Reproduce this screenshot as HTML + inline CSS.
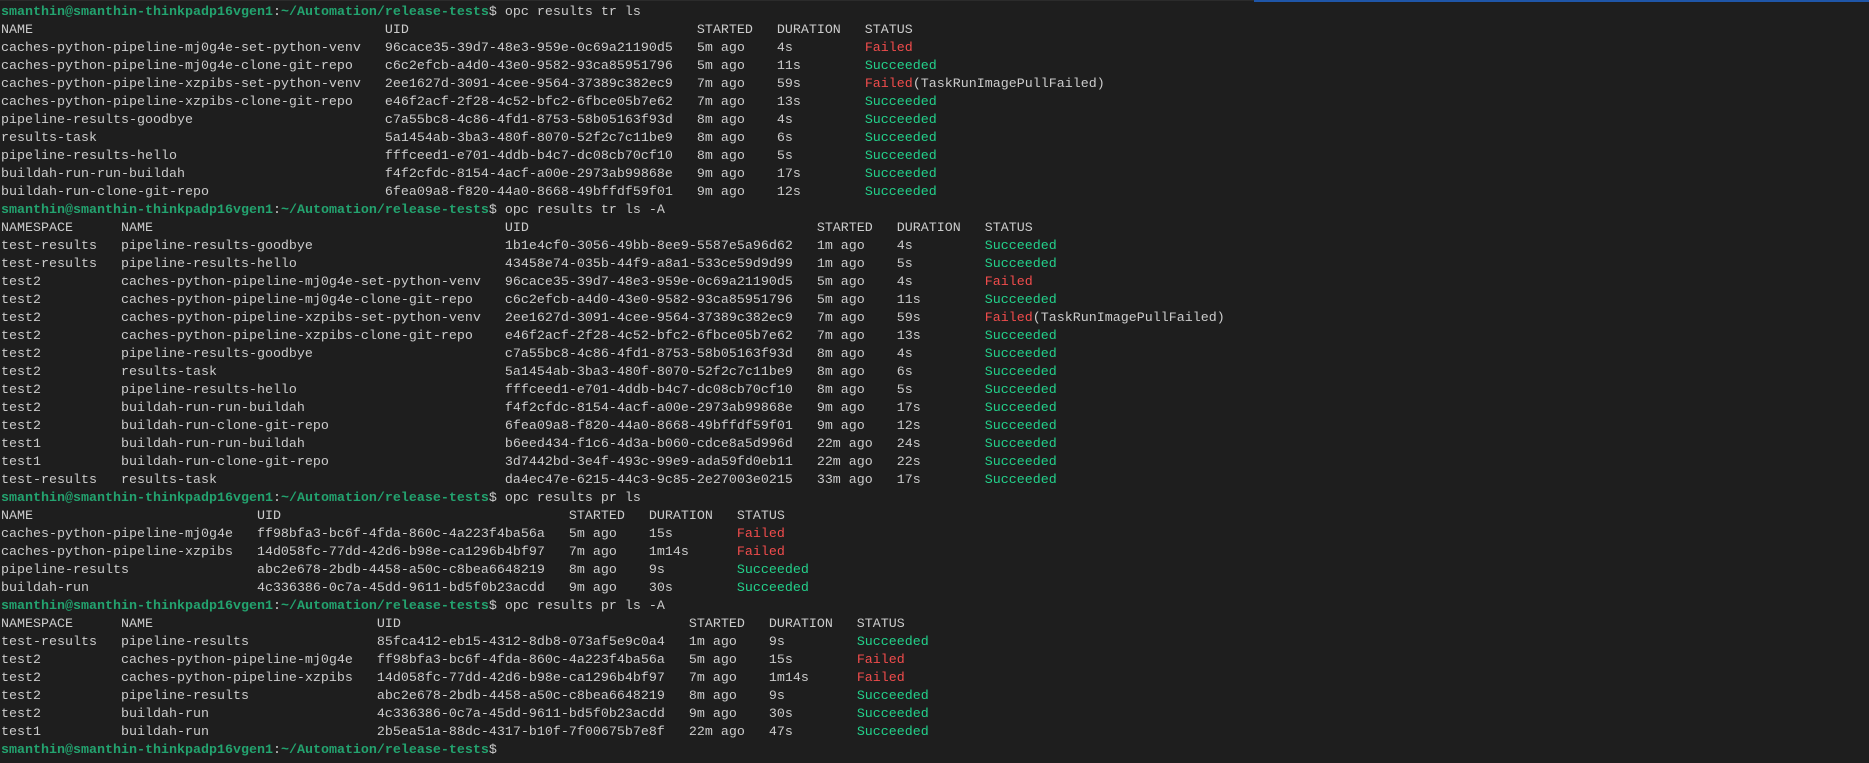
<!DOCTYPE html>
<html><head><meta charset="utf-8"><style>
html,body{margin:0;padding:0;background:#1e1e1e;width:1869px;height:763px;overflow:hidden}
.bar{position:absolute;left:1254px;top:0;width:615px;height:2px;background:#1f56a8}
.top{position:absolute;left:0;top:0;width:1254px;height:1px;background:#2b2b2b}
pre{margin:0;position:absolute;left:1px;top:4px;font-family:"Liberation Mono",monospace;font-size:13.33px;line-height:18px;color:#cccccc}
.p{color:#23a36f;font-weight:bold}
.r{color:#f14c4c}
.g{color:#23d18b}
</style></head><body>
<div class="top"></div><div class="bar"></div>
<pre><span class="p">smanthin@smanthin-thinkpadp16vgen1</span>:<span class="p">~/Automation/release-tests</span>$ opc results tr ls
NAME                                            UID                                    STARTED   DURATION   STATUS
caches-python-pipeline-mj0g4e-set-python-venv   96cace35-39d7-48e3-959e-0c69a21190d5   5m ago    4s         <span class="r">Failed</span>
caches-python-pipeline-mj0g4e-clone-git-repo    c6c2efcb-a4d0-43e0-9582-93ca85951796   5m ago    11s        <span class="g">Succeeded</span>
caches-python-pipeline-xzpibs-set-python-venv   2ee1627d-3091-4cee-9564-37389c382ec9   7m ago    59s        <span class="r">Failed</span>(TaskRunImagePullFailed)
caches-python-pipeline-xzpibs-clone-git-repo    e46f2acf-2f28-4c52-bfc2-6fbce05b7e62   7m ago    13s        <span class="g">Succeeded</span>
pipeline-results-goodbye                        c7a55bc8-4c86-4fd1-8753-58b05163f93d   8m ago    4s         <span class="g">Succeeded</span>
results-task                                    5a1454ab-3ba3-480f-8070-52f2c7c11be9   8m ago    6s         <span class="g">Succeeded</span>
pipeline-results-hello                          fffceed1-e701-4ddb-b4c7-dc08cb70cf10   8m ago    5s         <span class="g">Succeeded</span>
buildah-run-run-buildah                         f4f2cfdc-8154-4acf-a00e-2973ab99868e   9m ago    17s        <span class="g">Succeeded</span>
buildah-run-clone-git-repo                      6fea09a8-f820-44a0-8668-49bffdf59f01   9m ago    12s        <span class="g">Succeeded</span>
<span class="p">smanthin@smanthin-thinkpadp16vgen1</span>:<span class="p">~/Automation/release-tests</span>$ opc results tr ls -A
NAMESPACE      NAME                                            UID                                    STARTED   DURATION   STATUS
test-results   pipeline-results-goodbye                        1b1e4cf0-3056-49bb-8ee9-5587e5a96d62   1m ago    4s         <span class="g">Succeeded</span>
test-results   pipeline-results-hello                          43458e74-035b-44f9-a8a1-533ce59d9d99   1m ago    5s         <span class="g">Succeeded</span>
test2          caches-python-pipeline-mj0g4e-set-python-venv   96cace35-39d7-48e3-959e-0c69a21190d5   5m ago    4s         <span class="r">Failed</span>
test2          caches-python-pipeline-mj0g4e-clone-git-repo    c6c2efcb-a4d0-43e0-9582-93ca85951796   5m ago    11s        <span class="g">Succeeded</span>
test2          caches-python-pipeline-xzpibs-set-python-venv   2ee1627d-3091-4cee-9564-37389c382ec9   7m ago    59s        <span class="r">Failed</span>(TaskRunImagePullFailed)
test2          caches-python-pipeline-xzpibs-clone-git-repo    e46f2acf-2f28-4c52-bfc2-6fbce05b7e62   7m ago    13s        <span class="g">Succeeded</span>
test2          pipeline-results-goodbye                        c7a55bc8-4c86-4fd1-8753-58b05163f93d   8m ago    4s         <span class="g">Succeeded</span>
test2          results-task                                    5a1454ab-3ba3-480f-8070-52f2c7c11be9   8m ago    6s         <span class="g">Succeeded</span>
test2          pipeline-results-hello                          fffceed1-e701-4ddb-b4c7-dc08cb70cf10   8m ago    5s         <span class="g">Succeeded</span>
test2          buildah-run-run-buildah                         f4f2cfdc-8154-4acf-a00e-2973ab99868e   9m ago    17s        <span class="g">Succeeded</span>
test2          buildah-run-clone-git-repo                      6fea09a8-f820-44a0-8668-49bffdf59f01   9m ago    12s        <span class="g">Succeeded</span>
test1          buildah-run-run-buildah                         b6eed434-f1c6-4d3a-b060-cdce8a5d996d   22m ago   24s        <span class="g">Succeeded</span>
test1          buildah-run-clone-git-repo                      3d7442bd-3e4f-493c-99e9-ada59fd0eb11   22m ago   22s        <span class="g">Succeeded</span>
test-results   results-task                                    da4ec47e-6215-44c3-9c85-2e27003e0215   33m ago   17s        <span class="g">Succeeded</span>
<span class="p">smanthin@smanthin-thinkpadp16vgen1</span>:<span class="p">~/Automation/release-tests</span>$ opc results pr ls
NAME                            UID                                    STARTED   DURATION   STATUS
caches-python-pipeline-mj0g4e   ff98bfa3-bc6f-4fda-860c-4a223f4ba56a   5m ago    15s        <span class="r">Failed</span>
caches-python-pipeline-xzpibs   14d058fc-77dd-42d6-b98e-ca1296b4bf97   7m ago    1m14s      <span class="r">Failed</span>
pipeline-results                abc2e678-2bdb-4458-a50c-c8bea6648219   8m ago    9s         <span class="g">Succeeded</span>
buildah-run                     4c336386-0c7a-45dd-9611-bd5f0b23acdd   9m ago    30s        <span class="g">Succeeded</span>
<span class="p">smanthin@smanthin-thinkpadp16vgen1</span>:<span class="p">~/Automation/release-tests</span>$ opc results pr ls -A
NAMESPACE      NAME                            UID                                    STARTED   DURATION   STATUS
test-results   pipeline-results                85fca412-eb15-4312-8db8-073af5e9c0a4   1m ago    9s         <span class="g">Succeeded</span>
test2          caches-python-pipeline-mj0g4e   ff98bfa3-bc6f-4fda-860c-4a223f4ba56a   5m ago    15s        <span class="r">Failed</span>
test2          caches-python-pipeline-xzpibs   14d058fc-77dd-42d6-b98e-ca1296b4bf97   7m ago    1m14s      <span class="r">Failed</span>
test2          pipeline-results                abc2e678-2bdb-4458-a50c-c8bea6648219   8m ago    9s         <span class="g">Succeeded</span>
test2          buildah-run                     4c336386-0c7a-45dd-9611-bd5f0b23acdd   9m ago    30s        <span class="g">Succeeded</span>
test1          buildah-run                     2b5ea51a-88dc-4317-b10f-7f00675b7e8f   22m ago   47s        <span class="g">Succeeded</span>
<span class="p">smanthin@smanthin-thinkpadp16vgen1</span>:<span class="p">~/Automation/release-tests</span>$</pre>
</body></html>
